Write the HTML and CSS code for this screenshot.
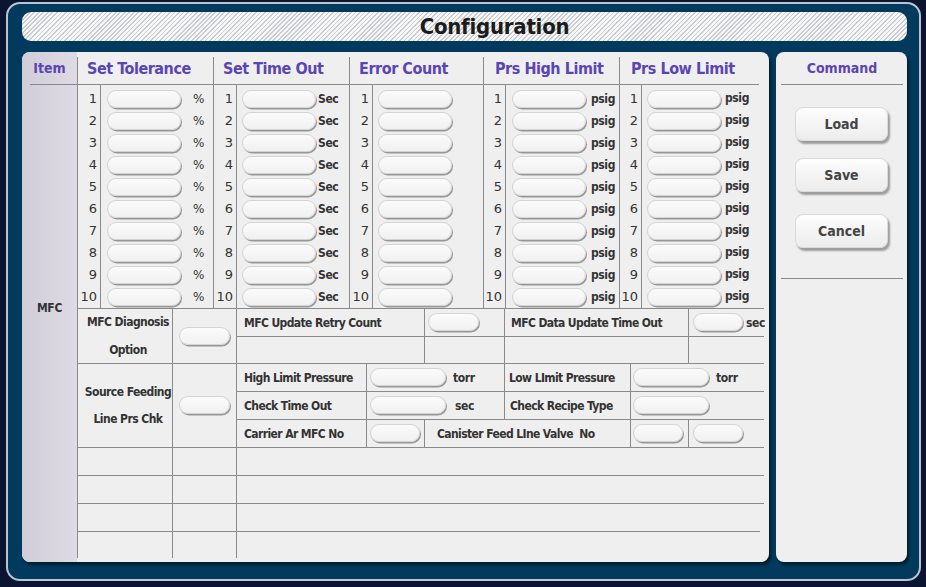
FILE: index.html
```html
<!DOCTYPE html>
<html>
<head>
<meta charset="utf-8">
<title>Configuration</title>
<link rel="stylesheet" href="styles.css">
</head>
<body>
<div class="frame">
  <div class="title">Configuration</div>
  <div class="panels">
    <div class="main">
      <div class="item-col">
        <div class="item-head">Item</div>
        <div class="item-body">MFC</div>
      </div>
      <div class="content">
        <div class="top">
          <div class="col c1">
            <div class="head">Set Tolerance</div>
            <div class="body">
              <div class="nums"><div>1</div><div>2</div><div>3</div><div>4</div><div>5</div><div>6</div><div>7</div><div>8</div><div>9</div><div>10</div></div>
              <div class="rows">
                <div class="row"><span class="inp"></span><span class="pct">%</span></div>
                <div class="row"><span class="inp"></span><span class="pct">%</span></div>
                <div class="row"><span class="inp"></span><span class="pct">%</span></div>
                <div class="row"><span class="inp"></span><span class="pct">%</span></div>
                <div class="row"><span class="inp"></span><span class="pct">%</span></div>
                <div class="row"><span class="inp"></span><span class="pct">%</span></div>
                <div class="row"><span class="inp"></span><span class="pct">%</span></div>
                <div class="row"><span class="inp"></span><span class="pct">%</span></div>
                <div class="row"><span class="inp"></span><span class="pct">%</span></div>
                <div class="row"><span class="inp"></span><span class="pct">%</span></div>
              </div>
            </div>
          </div>
          <div class="col c2">
            <div class="head">Set Time Out</div>
            <div class="body">
              <div class="nums"><div>1</div><div>2</div><div>3</div><div>4</div><div>5</div><div>6</div><div>7</div><div>8</div><div>9</div><div>10</div></div>
              <div class="rows">
                <div class="row"><span class="inp"></span><span class="unit">Sec</span></div>
                <div class="row"><span class="inp"></span><span class="unit">Sec</span></div>
                <div class="row"><span class="inp"></span><span class="unit">Sec</span></div>
                <div class="row"><span class="inp"></span><span class="unit">Sec</span></div>
                <div class="row"><span class="inp"></span><span class="unit">Sec</span></div>
                <div class="row"><span class="inp"></span><span class="unit">Sec</span></div>
                <div class="row"><span class="inp"></span><span class="unit">Sec</span></div>
                <div class="row"><span class="inp"></span><span class="unit">Sec</span></div>
                <div class="row"><span class="inp"></span><span class="unit">Sec</span></div>
                <div class="row"><span class="inp"></span><span class="unit">Sec</span></div>
              </div>
            </div>
          </div>
          <div class="col c3">
            <div class="head">Error Count</div>
            <div class="body">
              <div class="nums"><div>1</div><div>2</div><div>3</div><div>4</div><div>5</div><div>6</div><div>7</div><div>8</div><div>9</div><div>10</div></div>
              <div class="rows">
                <div class="row"><span class="inp"></span></div>
                <div class="row"><span class="inp"></span></div>
                <div class="row"><span class="inp"></span></div>
                <div class="row"><span class="inp"></span></div>
                <div class="row"><span class="inp"></span></div>
                <div class="row"><span class="inp"></span></div>
                <div class="row"><span class="inp"></span></div>
                <div class="row"><span class="inp"></span></div>
                <div class="row"><span class="inp"></span></div>
                <div class="row"><span class="inp"></span></div>
              </div>
            </div>
          </div>
          <div class="col c4">
            <div class="head">Prs High Limit</div>
            <div class="body">
              <div class="nums"><div>1</div><div>2</div><div>3</div><div>4</div><div>5</div><div>6</div><div>7</div><div>8</div><div>9</div><div>10</div></div>
              <div class="rows">
                <div class="row"><span class="inp"></span><span class="unit">psig</span></div>
                <div class="row"><span class="inp"></span><span class="unit">psig</span></div>
                <div class="row"><span class="inp"></span><span class="unit">psig</span></div>
                <div class="row"><span class="inp"></span><span class="unit">psig</span></div>
                <div class="row"><span class="inp"></span><span class="unit">psig</span></div>
                <div class="row"><span class="inp"></span><span class="unit">psig</span></div>
                <div class="row"><span class="inp"></span><span class="unit">psig</span></div>
                <div class="row"><span class="inp"></span><span class="unit">psig</span></div>
                <div class="row"><span class="inp"></span><span class="unit">psig</span></div>
                <div class="row"><span class="inp"></span><span class="unit">psig</span></div>
              </div>
            </div>
          </div>
          <div class="col c5">
            <div class="head">Prs Low Limit</div>
            <div class="body">
              <div class="nums"><div>1</div><div>2</div><div>3</div><div>4</div><div>5</div><div>6</div><div>7</div><div>8</div><div>9</div><div>10</div></div>
              <div class="rows">
                <div class="row"><span class="inp"></span><span class="unit up">psig</span></div>
                <div class="row"><span class="inp"></span><span class="unit up">psig</span></div>
                <div class="row"><span class="inp"></span><span class="unit up">psig</span></div>
                <div class="row"><span class="inp"></span><span class="unit up">psig</span></div>
                <div class="row"><span class="inp"></span><span class="unit up">psig</span></div>
                <div class="row"><span class="inp"></span><span class="unit up">psig</span></div>
                <div class="row"><span class="inp"></span><span class="unit up">psig</span></div>
                <div class="row"><span class="inp"></span><span class="unit up">psig</span></div>
                <div class="row"><span class="inp"></span><span class="unit up">psig</span></div>
                <div class="row"><span class="inp"></span><span class="unit up">psig</span></div>
              </div>
            </div>
          </div>
        </div>

        <div class="bottom">
          <div class="colA">
            <div class="ra h55">MFC Diagnosis<br>Option</div>
            <div class="ra h84">Source Feeding<br>Line Prs Chk</div>
            <div class="ra h28"></div>
            <div class="ra h28"></div>
            <div class="ra h28"></div>
            <div class="ra h26 last"></div>
          </div>
          <div class="colB">
            <div class="rb h55"><span class="inp w51"></span></div>
            <div class="rb h84"><span class="inp w51"></span></div>
            <div class="rb h28"></div>
            <div class="rb h28"></div>
            <div class="rb h28"></div>
            <div class="rb h26 last"></div>
          </div>
          <div class="colC">
            <div class="rc h28">
              <div class="cell w188 lbl">MFC Update Retry Count</div>
              <div class="cell w80"><span class="inp w51 ml3"></span></div>
              <div class="cell w184 lbl pl6">MFC Data Update Time Out</div>
              <div class="cell w75 nob"><span class="inp w50 ml4"></span><span class="unit ml3">sec</span></div>
            </div>
            <div class="rc h27">
              <div class="cell w188"></div>
              <div class="cell w80"></div>
              <div class="cell w184"></div>
              <div class="cell w75 nob"></div>
            </div>
            <div class="rc h28">
              <div class="cell w130 lbl">High Limit Pressure</div>
              <div class="cell w138"><span class="inp w76 ml3"></span><span class="unit ml7">torr</span></div>
              <div class="cell w126 lbl pl4">Low LImit Pressure</div>
              <div class="cell w133 nob"><span class="inp w76 ml2"></span><span class="unit ml7">torr</span></div>
            </div>
            <div class="rc h28">
              <div class="cell w130 lbl">Check Time Out</div>
              <div class="cell w138"><span class="inp w76 ml3"></span><span class="unit ml8">sec</span></div>
              <div class="cell w126 lbl pl5">Check Recipe Type</div>
              <div class="cell w133 nob"><span class="inp w76 ml2"></span></div>
            </div>
            <div class="rc h28">
              <div class="cell w130 lbl">Carrier Ar MFC No</div>
              <div class="cell w58"><span class="inp w50 ml3"></span></div>
              <div class="cell w206 lbl pl12">Canister Feed LIne Valve&nbsp; No</div>
              <div class="cell w58"><span class="inp w50 ml2"></span></div>
              <div class="cell w75 nob"><span class="inp w50 ml4"></span></div>
            </div>
            <div class="rc h28"></div>
            <div class="rc h28"></div>
            <div class="rc h28 short"></div>
            <div class="rc h26 last"></div>
          </div>
        </div>
      </div>
    </div>

    <div class="cmd">
      <div class="cmd-head">Command</div>
      <div class="btns">
        <div class="btn b-load">Load</div>
        <div class="btn b-save">Save</div>
        <div class="btn b-cancel">Cancel</div>
      </div>
      <div class="cmd-line"></div>
    </div>
  </div>
</div>
</body>
</html>
```

FILE: styles.css
```css
* { box-sizing: border-box; }

body {
  margin: 0;
  background: #0b1532;
  font-family: "DejaVu Sans Condensed", "DejaVu Sans", sans-serif;
  color: #333;
}

.frame {
  margin: 2px 0 0 6px;
  width: 915px;
  height: 579px;
  border: 2px solid #b9c6d1;
  border-radius: 14px;
  background: #023a5d;
  padding: 8px 12px 0 14px;
}

.title {
  height: 29px;
  border-radius: 9px;
  background: repeating-linear-gradient(135deg, #f7f7f7 0 2px, #c9cdd1 2px 3.2px);
  padding-left: 60px;
  text-align: center;
  font-weight: bold;
  font-size: 22px;
  letter-spacing: -0.25px;
  line-height: 29px;
  color: #1c1c1c;
}

.panels {
  display: flex;
  gap: 7px;
  margin-top: 11px;
}

.main {
  width: 747px;
  height: 510px;
  border-radius: 8px;
  background: #efefef;
  display: flex;
  overflow: hidden;
  box-shadow: 2px 3px 3px rgba(0, 0, 0, 0.5);
}

.item-col {
  width: 55px;
  flex: none;
  background: linear-gradient(to right, #d1cdd8, #dedbe4);
}

.item-head {
  margin-left: 8px;
  height: 33px;
  border-bottom: 1px solid #8a8a8a;
  padding-right: 8px;
  padding-bottom: 1px;
  display: flex;
  align-items: center;
  justify-content: center;
  font-weight: bold;
  font-size: 14px;
  color: #5a45b5;
}

.item-body {
  padding-top: 216px;
  text-align: center;
  font-weight: bold;
  font-size: 12px;
  letter-spacing: -0.3px;
  color: #333;
}

.content {
  width: 692px;
  flex: none;
  margin-top: 5px;
  height: 501px;
  border-left: 1px solid #8a8a8a;
}

.top {
  display: flex;
}

.col + .col {
  border-left: 1px solid #8a8a8a;
}

.c1 { width: 135px; }
.c2 { width: 136px; }
.c3 { width: 134px; }
.c4 { width: 136px; }
.c5 { width: 140px; }

.head {
  height: 28px;
  border-bottom: 1px solid #8a8a8a;
  padding-left: 9px;
  padding-bottom: 4px;
  display: flex;
  align-items: center;
  font-weight: bold;
  font-size: 16px;
  letter-spacing: -0.45px;
  color: #5a45b5;
  white-space: nowrap;
}
.c4 .head, .c5 .head { padding-left: 11px; }

.body {
  display: flex;
  height: 223px;
}

.nums {
  width: 23px;
  flex: none;
  border-right: 1px solid #8a8a8a;
  padding-top: 3px;
  padding-right: 3px;
  text-align: right;
  font-family: "DejaVu Sans", sans-serif;
  font-size: 13px;
}
.c4 .nums, .c5 .nums { width: 22px; }

.nums div {
  height: 22px;
  line-height: 22px;
}

.rows {
  padding-top: 3px;
}

.row {
  height: 22px;
  display: flex;
  align-items: center;
}

.inp {
  display: block;
  flex: none;
  width: 74px;
  height: 18px;
  border-radius: 9px;
  background: linear-gradient(#fbfbfb, #f1f1f1);
  border: 1px solid #d4d4d4;
  box-shadow: 1px 1.5px 0 #979797;
  margin-bottom: 1px;
}

.c1 .inp { margin-left: 6px; }
.c2 .inp { margin-left: 5px; }
.c3 .inp { margin-left: 5px; }
.c4 .inp { margin-left: 6px; }
.c5 .inp { margin-left: 5px; }

.pct {
  margin-left: 12px;
  font-family: "DejaVu Sans", sans-serif;
  font-size: 12px;
}

.unit {
  font-weight: bold;
  font-size: 12px;
  letter-spacing: -0.4px;
  color: #333;
}
.c2 .unit { margin-left: 2px; }
.c4 .unit { margin-left: 5px; }
.c5 .unit { margin-left: 4px; }
.unit.up { margin-bottom: 3px; }

/* bottom section */
.bottom {
  display: flex;
  width: 686px;
  border-top: 1px solid #8a8a8a;
}

.colA { width: 95px; flex: none; border-right: 1px solid #8a8a8a; }
.colB { width: 64px; flex: none; border-right: 1px solid #8a8a8a; }
.colC { width: 527px; flex: none; }

.ra, .rb, .rc { border-bottom: 1px solid #8a8a8a; }
.ra.last, .rb.last, .rc.last { border-bottom: none; }

.h55 { height: 55px; }
.h84 { height: 84px; }
.h28 { height: 28px; }
.h27 { height: 27px; }
.h26 { height: 26px; }

.ra {
  display: flex;
  flex-direction: column;
  justify-content: center;
  align-items: center;
  text-align: center;
  font-weight: bold;
  font-size: 12px;
  letter-spacing: -0.55px;
  white-space: nowrap;
  line-height: 28px;
  padding-left: 6px;
}
.ra.h84 { line-height: 27px; padding-top: 1px; }

.rb {
  display: flex;
  align-items: center;
}
.rb .inp { margin-left: 6px; }

.rc {
  display: flex;
}
.rc.short { margin-right: 4px; }

.cell {
  height: 100%;
  border-right: 1px solid #8a8a8a;
  display: flex;
  align-items: center;
  flex: none;
}
.cell.nob { border-right: none; }

.lbl {
  padding-left: 7px;
  font-weight: bold;
  font-size: 12px;
  letter-spacing: -0.6px;
  white-space: nowrap;
}
.pl4 { padding-left: 4px; }
.pl5 { padding-left: 5px; }
.pl6 { padding-left: 6px; }
.pl12 { padding-left: 12px; }

.w50 { width: 50px; }
.w51 { width: 51px; }
.w58 { width: 58px; }
.w75 { width: 75px; }
.w76 { width: 76px; }
.w80 { width: 80px; }
.w126 { width: 126px; }
.w130 { width: 130px; }
.w133 { width: 133px; }
.w138 { width: 138px; }
.w184 { width: 184px; }
.w188 { width: 188px; }
.w206 { width: 206px; }

.inp.w50 { width: 50px; }
.inp.w51 { width: 51px; }
.inp.w76 { width: 76px; }

.ml2 { margin-left: 2px; }
.ml3 { margin-left: 3px; }
.ml4 { margin-left: 4px; }
.unit.ml3 { margin-left: 3px; }
.unit.ml7 { margin-left: 7px; }
.unit.ml8 { margin-left: 9px; }

/* command panel */
.cmd {
  width: 131px;
  height: 510px;
  border-radius: 8px;
  background: #efefef;
  box-shadow: 2px 3px 3px rgba(0, 0, 0, 0.5);
  padding: 0 4px 0 5px;
}

.cmd-head {
  height: 33px;
  border-bottom: 1px solid #8a8a8a;
  padding-bottom: 1px;
  display: flex;
  align-items: center;
  justify-content: center;
  font-weight: bold;
  font-size: 14px;
  color: #5a45b5;
}

.btns {
  padding-left: 14px;
}

.btn {
  width: 93px;
  height: 34px;
  border-radius: 8px;
  background: linear-gradient(#fdfdfd, #ececec);
  border: 1px solid #dadada;
  box-shadow: 2px 3px 2px rgba(0, 0, 0, 0.35);
  display: flex;
  align-items: center;
  justify-content: center;
  font-weight: bold;
  font-size: 14px;
  color: #444;
}
.b-load { margin-top: 22px; }
.b-save { margin-top: 17px; }
.b-cancel { margin-top: 22px; }

.cmd-line {
  margin-top: 30px;
  border-top: 1px solid #8a8a8a;
}
```
